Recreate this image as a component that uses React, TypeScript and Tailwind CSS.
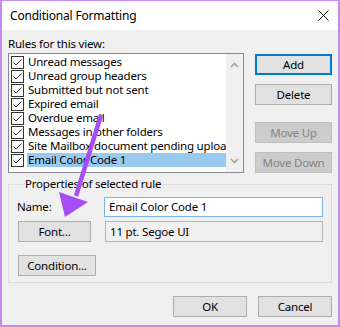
import React from "react";

const rules = [
  "Unread messages",
  "Unread group headers",
  "Submitted but not sent",
  "Expired email",
  "Overdue email",
  "Messages in other folders",
  "Site Mailbox document pending upload",
  "Email Color Code 1",
];

function CheckBox() {
  return (
    <svg width="13" height="13" viewBox="0 0 13 13" className="shrink-0">
      <rect x="0.5" y="0.5" width="12" height="12" fill="none" stroke="#333333" />
      <path d="M2.5 6.5 L5 9 L10.5 3.5" fill="none" stroke="#333333" strokeWidth="1" />
    </svg>
  );
}

function Btn({
  label,
  className = "",
  disabled = false,
  focused = false,
}: {
  label: string;
  className?: string;
  disabled?: boolean;
  focused?: boolean;
}) {
  return (
    <div
      className={
        "flex h-[21px] items-center justify-center " +
        (focused
          ? "border-2 border-[#0078d7] bg-[#e1e1e1] text-black "
          : disabled
          ? "border border-[#bfbfbf] bg-[#cccccc] text-[#838383] "
          : "border border-[#adadad] bg-[#e1e1e1] text-black ") +
        className
      }
    >
      {label}
    </div>
  );
}

export default function App() {
  return (
    <div
      className="relative flex h-[327px] w-[340px] flex-col border-x-2 border-b-2 border-t border-[#c08cf0] bg-[#f0f0f0] text-[11.5px] leading-[16px] tracking-[-0.2px] text-black"
      style={{ fontFamily: '"Noto Sans", "Open Sans", sans-serif' }}
    >
      {/* Title bar */}
      <div className="flex h-[29px] shrink-0 items-center justify-between bg-white pl-[8px] pr-[9px]">
        <span className="text-[12px]">Conditional Formatting</span>
        <svg width="11" height="11" viewBox="0 0 11 11">
          <path d="M0.5 0.5 L10.5 10.5 M10.5 0.5 L0.5 10.5" stroke="#000" strokeWidth="1" />
        </svg>
      </div>

      <div className="flex flex-1 flex-col px-[6px] pt-[6px]">
        <div>Rules for this view:</div>

        <div className="mt-[1px] flex gap-[11px]">
          {/* List box */}
          <div className="flex h-[120px] w-[236px] border border-[#828790] bg-white">
            <div className="flex min-w-0 flex-1 flex-col overflow-hidden pt-[1px]">
              {rules.map((r, i) => (
                <div key={r} className="flex h-[14px] items-center whitespace-nowrap pl-[2px] leading-[14px]">
                  <CheckBox />
                  <span
                    className={
                      "ml-[3px] flex h-[14px] flex-1 items-center pl-[1px] " +
                      (i === rules.length - 1 ? "bg-[#99c9ef]" : "")
                    }
                  >
                    {r}
                  </span>
                </div>
              ))}
            </div>
            <div className="flex w-[17px] shrink-0 flex-col items-center justify-between bg-[#f0f0f0] py-[8px]">
              <svg width="9" height="6" viewBox="0 0 9 6">
                <path d="M1 5 L4.5 1.5 L8 5" fill="none" stroke="#a3a3a3" strokeWidth="1.6" />
              </svg>
              <svg width="9" height="6" viewBox="0 0 9 6">
                <path d="M1 1 L4.5 4.5 L8 1" fill="none" stroke="#a3a3a3" strokeWidth="1.6" />
              </svg>
            </div>
          </div>

          {/* Side buttons */}
          <div className="flex w-[78px] flex-col">
            <Btn label="Add" focused className="mt-[1px]" />
            <Btn label="Delete" className="mt-[9px]" />
            <Btn label="Move Up" disabled className="mt-[17px]" />
            <Btn label="Move Down" disabled className="mt-[9px]" />
          </div>
        </div>

        {/* Properties group */}
        <fieldset className="mt-[4px] border border-[#dcdcdc] px-[8px] pb-[6px] pt-[6px]">
          <legend className="ml-[6px] px-[2px] leading-[14px]">Properties of selected rule</legend>
          <div className="flex h-[20px] items-center">
            <span className="w-[87px]">Name:</span>
            <div className="flex h-[20px] flex-1 items-center border border-[#7eb4ea] bg-white pl-[4px]">
              Email Color Code 1
            </div>
          </div>
          <div className="mt-[4px] flex items-center">
            <Btn label="Font..." className="ml-[1px] w-[73px]" />
            <div className="ml-[14px] flex h-[21px] flex-1 items-center border border-[#b4b4b4] bg-[#f0f0f0] pl-[4px]">
              11 pt. Segoe UI
            </div>
          </div>
          <Btn label="Condition..." className="ml-[1px] mt-[13px] w-[78px]" />
        </fieldset>

        <div className="mt-[13px] flex justify-end gap-[11px]">
          <Btn label="OK" className="w-[74px]" />
          <Btn label="Cancel" className="w-[74px]" />
        </div>
      </div>

      {/* Annotation arrow */}
      <svg
        className="pointer-events-none absolute left-[-2px] top-[-1px]"
        width="340"
        height="327"
        viewBox="0 0 340 327"
      >
        <line x1="101" y1="115" x2="76" y2="196" stroke="#a64df5" strokeWidth="4.5" />
        <polygon points="59,192 88,202 65,217" fill="#a64df5" />
      </svg>
    </div>
  );
}
